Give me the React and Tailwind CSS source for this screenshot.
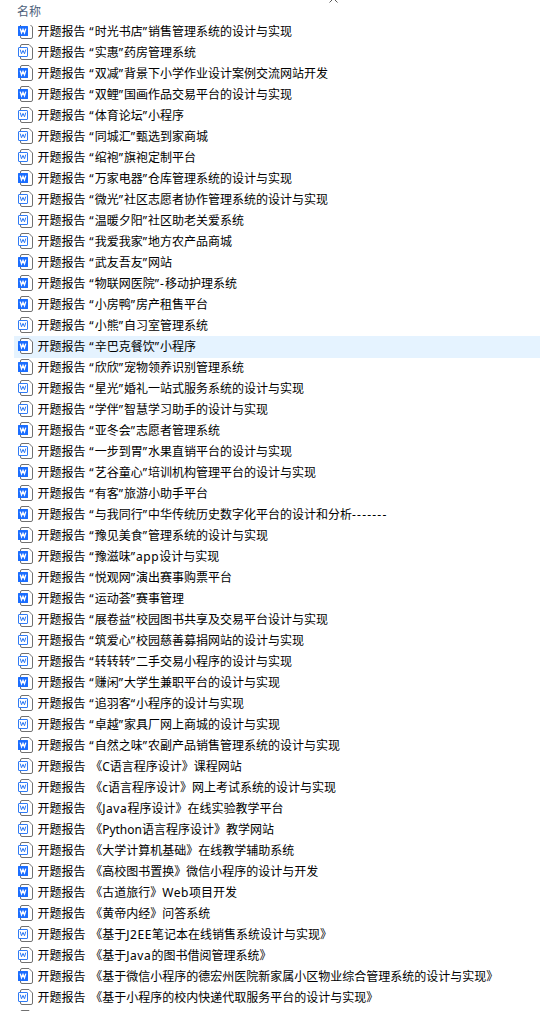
import React from 'react';
import clsx from 'clsx';

const PREFIX = '开题报告';

const files = [
  { name: '“时光书店”销售管理系统的设计与实现', solid: true },
  { name: '“实惠”药房管理系统' },
  { name: '“双减”背景下小学作业设计案例交流网站开发', solid: true },
  { name: '“双鲤”国画作品交易平台的设计与实现', solid: true },
  { name: '“体育论坛”小程序' },
  { name: '“同城汇”甄选到家商城' },
  { name: '“绾袍”旗袍定制平台' },
  { name: '“万家电器”仓库管理系统的设计与实现', solid: true },
  { name: '“微光”社区志愿者协作管理系统的设计与实现' },
  { name: '“温暖夕阳”社区助老关爱系统' },
  { name: '“我爱我家”地方农产品商城' },
  { name: '“武友吾友”网站', solid: true },
  { name: '“物联网医院”-移动护理系统', solid: true },
  { name: '“小房鸭”房产租售平台', solid: true },
  { name: '“小熊”自习室管理系统' },
  { name: '“辛巴克餐饮”小程序', solid: true, active: true },
  { name: '“欣欣”宠物领养识别管理系统', solid: true },
  { name: '“星光”婚礼一站式服务系统的设计与实现' },
  { name: '“学伴”智慧学习助手的设计与实现' },
  { name: '“亚冬会”志愿者管理系统', solid: true },
  { name: '“一步到胃”水果直销平台的设计与实现' },
  { name: '“艺谷童心”培训机构管理平台的设计与实现', solid: true },
  { name: '“有客”旅游小助手平台', solid: true },
  { name: '“与我同行”中华传统历史数字化平台的设计和分析-------', solid: true },
  { name: '“豫见美食”管理系统的设计与实现', solid: true },
  { name: '“豫滋味”app设计与实现', solid: true },
  { name: '“悦观网”演出赛事购票平台', solid: true },
  { name: '“运动荟”赛事管理', solid: true },
  { name: '“展卷益”校园图书共享及交易平台设计与实现' },
  { name: '“筑爱心”校园慈善募捐网站的设计与实现' },
  { name: '“转转转”二手交易小程序的设计与实现' },
  { name: '“赚闲”大学生兼职平台的设计与实现', solid: true },
  { name: '“追羽客“小程序的设计与实现' },
  { name: '“卓越”家具厂网上商城的设计与实现' },
  { name: '“自然之味”农副产品销售管理系统的设计与实现', solid: true },
  { name: '《C语言程序设计》课程网站' },
  { name: '《c语言程序设计》网上考试系统的设计与实现' },
  { name: '《Java程序设计》在线实验教学平台' },
  { name: '《Python语言程序设计》教学网站' },
  { name: '《大学计算机基础》在线教学辅助系统' },
  { name: '《高校图书置换》微信小程序的设计与开发', solid: true },
  { name: '《古道旅行》Web项目开发', solid: true },
  { name: '《黄帝内经》问答系统', solid: true },
  { name: '《基于J2EE笔记本在线销售系统设计与实现》' },
  { name: '《基于Java的图书借阅管理系统》' },
  { name: '《基于微信小程序的德宏州医院新家属小区物业综合管理系统的设计与实现》', solid: true },
  { name: '《基于小程序的校内快递代取服务平台的设计与实现》' },
];

const WordIcon = ({ solid }) => (
  <svg width="16" height="16" viewBox="0 0 16 16" fill="none" className="shrink-0">
    <path
      d="M2.5 3V2Q2.5 0.5 4 0.5H11L14.5 4V14Q14.5 15.5 13 15.5H4Q2.5 15.5 2.5 14V13"
      fill="#fff"
      stroke="#707070"
    />
    {solid ? (
      <rect x="0" y="3" width="10" height="10" rx="0.5" fill="#1a6dff" />
    ) : (
      <rect x="0.5" y="3.5" width="9" height="9" rx="0.5" fill="#fff" stroke="#2f7bf5" />
    )}
    <path
      d="M2.2 5.6L3.5 9.8L5 6.4L6.5 9.8L7.8 5.6"
      stroke={solid ? '#fff' : '#2f7bf5'}
      strokeWidth={solid ? 1.3 : 1}
    />
  </svg>
);

// quotes, dashes and a few latin words are set slightly wider than the font's own advance
const FileName = ({ name }) =>
  name.split(/([“”]|-+|Java|J2EE|Web|app)/).map((part, i) => {
    if (i % 2 === 0) return part;
    return (
      <span key={i} className={/[“”]/.test(part) ? 'tracking-[1px]' : part[0] === '-' ? 'tracking-[1.2px]' : 'tracking-[0.6px]'}>
        {part}
      </span>
    );
  });

const FileRow = ({ file, clipped }) => (
  <li
    className={clsx(
      'flex h-[21px] shrink-0 items-start pl-1',
      file.active && 'bg-[#e5f3ff] shadow-[0_1px_0_#e5f3ff]'
    )}
  >
    <span className={clsx('mt-0.5 flex', clipped && '[clip-path:inset(2px_0_0_0)]')}>
      <WordIcon solid={file.solid} />
    </span>
    <span className="ml-[3.5px] whitespace-pre leading-[21px]">
      {PREFIX}
      <span className={file.name[0] === '《' ? 'tracking-[1.5px]' : 'tracking-[0.7px]'}> </span>
      <FileName name={file.name} />
    </span>
  </li>
);

const App = () => {
  return (
    <div className="flex h-[1011px] w-[540px] flex-col overflow-hidden bg-white font-['Noto_Sans','Noto_Sans_CJK_SC',sans-serif] text-[12px] text-black">
      {/* Column header */}
      <div className="relative flex h-[21px] shrink-0 items-start pl-[17px] text-[#4c607a]">
        <span className="leading-[23px]">名称</span>
        <svg width="9" height="3" viewBox="0 0 9 3" fill="none" className="absolute left-[329px] top-0">
          <path d="M0.5 2.5L3.5 -0.5M8.5 2.5L5.5 -0.5" stroke="#5a5a5a" />
        </svg>
      </div>

      {/* File list, the first icon slides a little under the header */}
      <ul className="flex flex-col pl-3.5">
        {files.map((file, i) => (
          <FileRow key={file.name} file={file} clipped={i === 0} />
        ))}
        <li className="flex h-[21px] shrink-0 pl-1 pt-0.5">
          <WordIcon />
        </li>
      </ul>
    </div>
  );
};

export default App;
